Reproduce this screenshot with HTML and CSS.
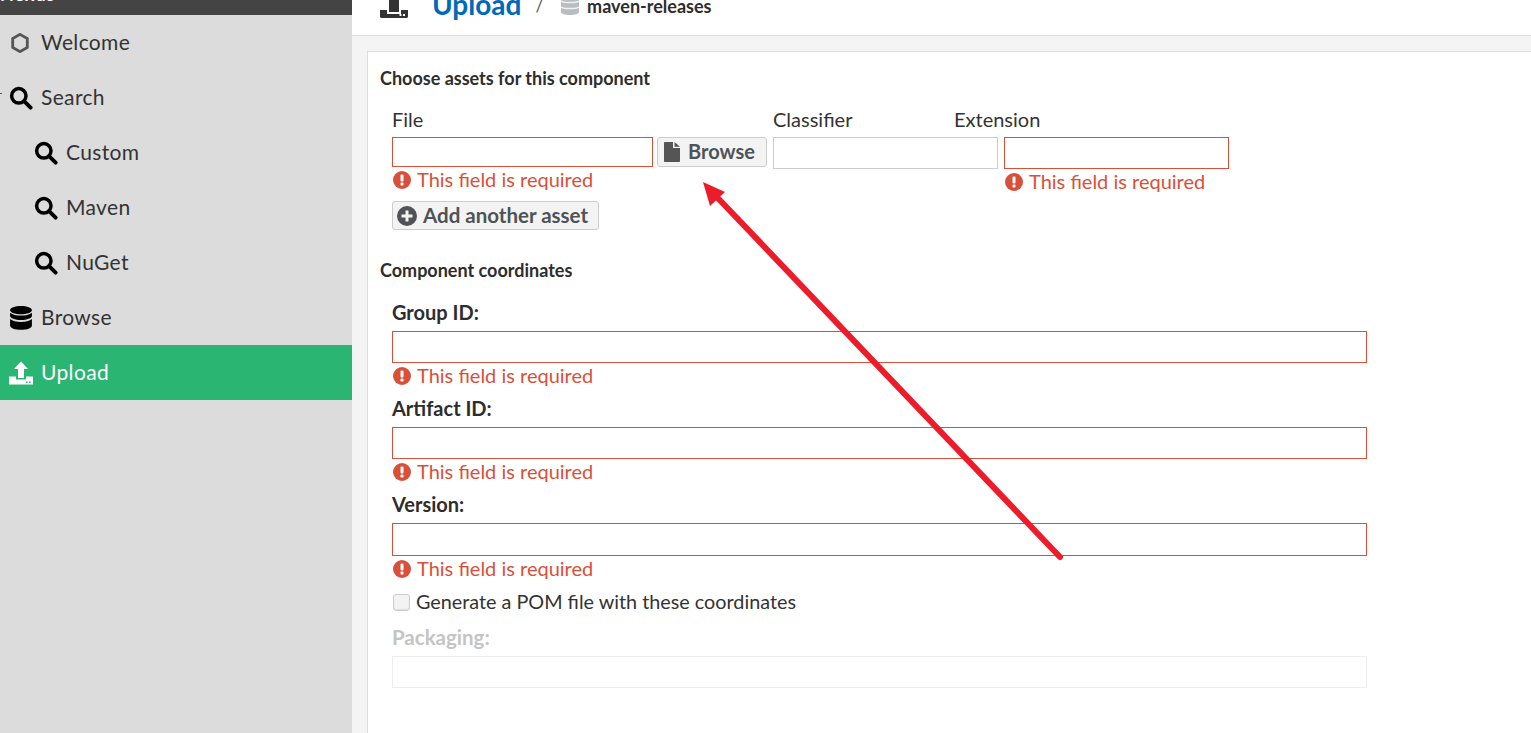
FILE: index.html
```html
<!DOCTYPE html>
<html lang="en">
<head>
<meta charset="utf-8">
<title>Upload</title>
<link rel="stylesheet" href="styles.css">
</head>
<body>
<svg width="0" height="0" class="defs">
  <symbol id="i-search" viewBox="0 0 22 22"><circle cx="9" cy="9" r="6.6" fill="none" stroke="currentColor" stroke-width="3.2"/><path d="M13.8 13.8l6 6" stroke="currentColor" stroke-width="3.6" stroke-linecap="round"/></symbol>
  <symbol id="i-err" viewBox="0 0 18 18"><circle cx="9" cy="9" r="9" fill="#d9503a"/><rect x="7.5" y="3.5" width="3" height="7" rx="1" fill="#fff"/><rect x="7.5" y="11.6" width="3" height="3" rx=".8" fill="#fff"/></symbol>
</svg>
<div class="app">
  <aside class="sidebar">
    <div class="topbar"><span class="clipped">Nexus</span></div>
    <nav class="menu">
      <a class="item"><svg class="ic hex" viewBox="0 0 18 20"><path d="M9 1.4l7.300 4.200v8.800L9 18.600l-7.300-4.200V5.600z" fill="none" stroke="#555" stroke-width="2.800"/></svg>Welcome</a>
      <a class="item expander"><svg class="ic"><use href="#i-search"/></svg>Search</a>
      <a class="item sub"><svg class="ic"><use href="#i-search"/></svg>Custom</a>
      <a class="item sub"><svg class="ic"><use href="#i-search"/></svg>Maven</a>
      <a class="item sub"><svg class="ic"><use href="#i-search"/></svg>NuGet</a>
      <a class="item"><svg class="ic" viewBox="0 0 20 22"><path fill="#000" d="M10 0c5.500 0 10 1.700 10 3.800S15.500 7.500 10 7.500 0 5.900 0 3.800 4.500 0 10 0zM0 6.200c2 1.800 6 2.600 10 2.600s8-.8 10-2.600v3c0 2-4.500 3.700-10 3.700S0 11.200 0 9.200zM0 12c2 1.800 6 2.600 10 2.600s8-.8 10-2.600v6c0 2.100-4.500 3.800-10 3.800S0 20.100 0 18z"/></svg>Browse</a>
      <a class="item active"><svg class="ic" viewBox="0 0 24 23"><path fill="#fff" d="M12 0l7 7.500h-4v9H9v-9H5zM0 15h7v3h10v-3h7v8H0z"/><rect x="17" y="20" width="1.500" height="1.500" fill="#2ab573"/><rect x="20" y="20" width="1.500" height="1.500" fill="#2ab573"/></svg>Upload</a>
    </nav>
  </aside>
  <main class="main">
    <header class="header">
      <svg class="h-upload" viewBox="0 0 28 28"><path fill="#333" d="M14 0l9 8h-4v13H9V8H5zM0 19h7v4h14v-4h7v6.500c0 1-1 1.500-2 1.500H2c-1 0-2-.5-2-1.500z"/><rect x="19.500" y="23" width="2" height="2" fill="#fff"/><rect x="23" y="23" width="2" height="2" fill="#fff"/></svg>
      <span class="h-title">Upload</span>
      <span class="h-slash">/</span>
      <svg class="h-db" viewBox="0 0 18 18"><path fill="#b9bdc1" d="M0 -2h18v17c0 2-4 3-9 3s-9-1-9-3z"/><path d="M0 4c2 2 16 2 18 0M0 10c2 2 16 2 18 0" stroke="#eef0f1" stroke-width="1.500" fill="none"/></svg>
      <span class="h-repo">maven-releases</span>
    </header>
    <div class="content">
      <section class="panel">
        <h2 class="heading">Choose assets for this component</h2>
        <div class="indent">
          <div class="col-labels">
            <span class="cl-file">File</span>
            <span class="cl-class">Classifier</span>
            <span>Extension</span>
          </div>
          <div class="asset-row">
            <div class="cell-file">
              <div class="input invalid file-input"></div>
              <div class="err"><svg class="err-ic"><use href="#i-err"/></svg>This field is required</div>
            </div>
            <button class="btn browse" type="button"><svg class="b-file" viewBox="0 0 16 20"><path fill="#555" d="M0 1c0-.6.4-1 1-1h8v6h7v13c0 .6-.4 1-1 1H1c-.6 0-1-.4-1-1zM10.500 0L16 4.700h-5.500z"/></svg>Browse</button>
            <div class="input tall classifier"></div>
            <div class="cell-ext">
              <div class="input tall invalid"></div>
              <div class="err"><svg class="err-ic"><use href="#i-err"/></svg>This field is required</div>
            </div>
          </div>
          <button class="btn add" type="button"><svg class="b-plus" viewBox="0 0 20 20"><circle cx="10" cy="10" r="10" fill="#4f5357"/><path d="M10 4.500v11M4.500 10h11" stroke="#f3f3f3" stroke-width="3"/></svg>Add another asset</button>
        </div>
        <h2 class="heading second">Component coordinates</h2>
        <div class="indent">
          <label class="flabel first">Group ID:</label>
          <div class="input wide invalid"></div>
          <div class="err"><svg class="err-ic"><use href="#i-err"/></svg>This field is required</div>
          <label class="flabel">Artifact ID:</label>
          <div class="input wide invalid"></div>
          <div class="err"><svg class="err-ic"><use href="#i-err"/></svg>This field is required</div>
          <label class="flabel">Version:</label>
          <div class="input wide invalid version"></div>
          <div class="err err-last"><svg class="err-ic"><use href="#i-err"/></svg>This field is required</div>
          <div class="check"><span class="box"></span>Generate a POM file with these coordinates</div>
          <label class="flabel disabled">Packaging:</label>
          <div class="input wide off"></div>
        </div>
      </section>
    </div>
  </main>
</div>
<svg class="arrow" viewBox="0 0 1531 733" width="1531" height="733">
  <path d="M1060 557L714 194" stroke="#ed1c2a" stroke-width="6" stroke-linecap="round" fill="none"/>
  <path d="M703 182L725 192 710 206z" fill="#ed1c2a"/>
</svg>
</body>
</html>
```
FILE: styles.css
```css
* { box-sizing: border-box; }
html, body { margin: 0; height: 733px; overflow: hidden; background: #fff; }
body { font-family: "Lato", "Open Sans", sans-serif; color: #2d2d2d; position: relative; }
.defs { position: absolute; }
.app { display: flex; width: 1531px; height: 733px; }

.sidebar { width: 352px; flex: none; background: #dcdcdc; }
.topbar { height: 15px; background: #444; overflow: hidden; }
.clipped { display: block; margin: -14px 0 0 0; font: 700 18px/16px "Lato", sans-serif; letter-spacing: 1px; color: #fff; }
.item { display: flex; align-items: center; height: 55px; padding: 0 0 2px 9px; font-size: 21px; color: #333; letter-spacing: .35px; }
.item .ic { width: 24px; height: 24px; margin: 2px 8px 0 0; flex: none; color: #000; }
.item .hex { width: 18px; height: 20px; margin: 2px 12px 0 2px; }
.expander { position: relative; }
.expander::before { content: ""; position: absolute; left: 0; top: 23px; width: 2px; height: 1px; background: #555; }
.sub { padding-left: 34px; }
.active { background: #2ab573; color: #fff; }

.main { flex: 1; min-width: 0; display: flex; flex-direction: column; }
.header { height: 36px; flex: none; background: #fff; border-bottom: 1px solid #dcdcdc; display: flex; align-items: flex-end; padding-left: 28px; overflow: hidden; position: relative; }
.h-upload { width: 28px; height: 28px; margin-bottom: 16px; flex: none; }
.h-title { margin: 0 0 16px 24px; font-size: 28px; line-height: 30px; font-weight: 700; color: #0069b8; }
.h-slash { margin: 0 0 19px 14px; font-size: 17px; color: #555; }
.h-db { width: 18px; height: 18px; margin: 0 0 20px 18px; flex: none; }
.h-repo { margin: 0 0 19px 8px; font-size: 18px; line-height: 20px; font-weight: 700; color: #2d2d2d; }

.content { flex: 1; background: #f4f4f4; padding: 15px 0 0 15px; min-height: 0; }
.panel { height: 100%; background: #fff; border: 1px solid #dcdcdc; border-right: 0; border-bottom: 0; padding: 16px 0 0 12px; }
.heading { margin: 0; font-size: 18px; line-height: 20px; font-weight: 700; color: #2d2d2d; }
.second { margin-top: 30px; }
.indent { padding-left: 12px; }

.col-labels { display: flex; margin-top: 20px; font-size: 20px; line-height: 23px; color: #333; height: 23px; }
.cl-file { width: 381px; }
.cl-class { width: 181px; }
.asset-row { display: flex; align-items: flex-start; margin-top: 6px; height: 56px; }
.cell-file { width: 261px; margin-right: 4px; }
.cell-ext { width: 225px; }

.input { border: 1px solid #ccc; background: #fff; height: 30px; }
.invalid { border-color: #d9503a; }
.tall { height: 32px; }
.classifier { width: 225px; margin: 0 6px 0 6px; }
.wide { width: 975px; height: 32px; }
.wide.version { height: 33px; }
.off { border-color: #eee; }

.err { display: flex; align-items: center; height: 26px; padding-bottom: 2px; font-size: 20px; color: #d9503a; white-space: nowrap; }
.err-last { height: 25px; }
.err-ic { width: 18px; height: 18px; margin: 2px 6px 0 1px; flex: none; }

.btn { display: flex; align-items: center; font-family: inherit; font-weight: 700; font-size: 20px; color: #4f5357; background: #f3f3f3; border: 1px solid #ccc; border-radius: 3px; padding: 0 0 2px; }
.browse { width: 110px; height: 30px; padding-left: 6px; flex: none; }
.b-file { width: 16px; height: 20px; margin: 2px 8px 0 0; }
.add { width: 207px; height: 29px; margin-top: 8px; padding-left: 4px; font-size: 20.500px; }
.b-plus { width: 20px; height: 20px; margin: 2px 6px 0 0; }

.flabel { display: block; height: 38px; padding-top: 8px; font-size: 20px; line-height: 22px; font-weight: 700; color: #2d2d2d; }
.flabel.first { margin-top: 13px; }
.disabled { color: #c4c4c4; margin-top: 4px; font-size: 20.500px; }

.check { display: flex; align-items: center; height: 24px; margin-top: 9px; padding-bottom: 2px; font-size: 19.800px; color: #333; white-space: nowrap; }
.box { width: 17px; height: 17px; margin: 2px 6px 0 1px; border: 1px solid #ccc; border-radius: 3px; background: #f3f3f3; box-shadow: inset 0 -1px 1px #ddd; flex: none; }

.arrow { position: absolute; left: 0; top: 0; pointer-events: none; }
```
